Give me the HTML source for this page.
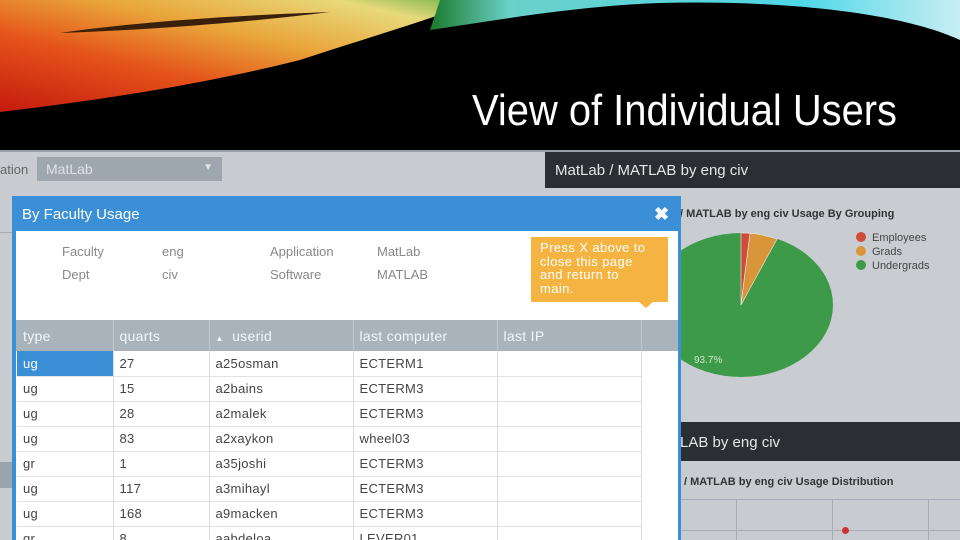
<!DOCTYPE html>
<html><head><meta charset="utf-8"><style>
*{margin:0;padding:0;box-sizing:border-box}
body{width:960px;height:540px;overflow:hidden;position:relative;background:#c8ccd0;font-family:"Liberation Sans",sans-serif}
.abs{position:absolute}
.modal{left:12px;top:196px;width:669px;height:344px;background:#3a8fd6;overflow:hidden}
.mb{left:4px;top:35px;width:662px;height:309px;background:#fff;overflow:hidden}
table{border-collapse:collapse;position:absolute;left:1px;top:89px;font-size:13px;color:#444}
td,th{height:25px;padding-left:6px;text-align:left;border-right:1px solid #dcdcdc;border-bottom:1px solid #e2e2e2;font-weight:normal;letter-spacing:.3px}
th{background:#a9b3bc;color:#f4f6f8;height:31px;font-size:14px;border-right:1px solid #c4cad0;border-bottom:none}
</style></head><body>
<svg class="abs" style="left:0;top:0" width="960" height="150">
<defs>
<linearGradient id="g1" x1="0" y1="1" x2="1" y2="0"><stop offset="0" stop-color="#c41a0e"/><stop offset=".35" stop-color="#e5541a"/><stop offset=".6" stop-color="#e9a53a"/><stop offset=".85" stop-color="#e8d97a"/><stop offset="1" stop-color="#6ab04a"/></linearGradient>
<linearGradient id="g2" x1="0" y1="0" x2="1" y2="0"><stop offset="0" stop-color="#1a7a2a"/><stop offset=".15" stop-color="#6ad0c8"/><stop offset=".7" stop-color="#4fd7e8"/><stop offset="1" stop-color="#c8eef2"/></linearGradient>
</defs>
<rect width="960" height="150" fill="#000"/>
<path d="M0 0 H480 C430 20 360 40 300 60 C200 85 100 100 0 112 Z" fill="url(#g1)"/>
<path d="M440 0 H960 V40 C900 12 780 0 660 3 C580 6 510 18 430 30 Z" fill="url(#g2)"/>
<path d="M60 33 C150 20 250 15 330 12 C250 22 150 30 60 33Z" fill="#3a2008"/>
<text x="472" y="125" fill="#fff" font-size="44" font-family="Liberation Sans" textLength="425" lengthAdjust="spacingAndGlyphs">View of Individual Users</text>
</svg>
<div class="abs" style="left:0;top:150px;width:960px;height:2px;background:#9aa0a6"></div>
<div class="abs" style="left:0;top:162px;font-size:13px;color:#666">ation</div>
<div class="abs" style="left:37px;top:157px;width:185px;height:24px;background:#9ea7af;color:#dde2e6;font-size:14px;padding:4px 9px">MatLab<span style="position:absolute;right:9px;top:5px;font-size:10px">▼</span></div>
<div class="abs" style="left:0;top:232px;width:12px;height:1px;background:#aaa"></div>
<div class="abs" style="left:0;top:462px;width:12px;height:26px;background:#9ba4ac"></div>
<div class="abs" style="left:545px;top:152px;width:415px;height:36px;background:#2b2f34;color:#e6e6e6;font-size:15px;padding:10px 10px">MatLab / MATLAB by eng civ</div>
<div class="abs" style="left:548px;top:188px;width:412px;height:234px;background:#c9cdd1"></div>
<div class="abs" style="left:680px;top:208px;font-size:11px;font-weight:bold;color:#333">/ MATLAB by eng civ Usage By Grouping</div>
<svg class="abs" style="left:660px;top:225px" width="300" height="160">
<ellipse cx="81" cy="80" rx="92" ry="72" fill="#3d9a48"/>
<path d="M81 80 L81 8 A92 72 0 0 1 90 8.2Z" fill="#d04b3a" stroke="#eee" stroke-width=".6"/>
<path d="M81 80 L90 8.2 A92 72 0 0 1 117 14Z" fill="#d9953a" stroke="#eee" stroke-width=".6"/>
<text x="34" y="138" fill="#cfe6cf" font-size="10">93.7%</text>
<circle cx="201" cy="12" r="5" fill="#d04b3a"/><text x="212" y="16" font-size="11" fill="#444">Employees</text>
<circle cx="201" cy="26" r="5" fill="#d9953a"/><text x="212" y="30" font-size="11" fill="#444">Grads</text>
<circle cx="201" cy="40" r="5" fill="#3d9a48"/><text x="212" y="44" font-size="11" fill="#444">Undergrads</text>
</svg>
<div class="abs" style="left:678px;top:422px;width:282px;height:39px;background:#2b2f34;color:#e6e6e6;font-size:15px;padding:12px 2px">LAB by eng civ</div>
<div class="abs" style="left:684px;top:476px;font-size:11px;font-weight:bold;color:#333">/ MATLAB by eng civ Usage Distribution</div>
<div class="abs" style="left:678px;top:499px;width:282px;height:1px;background:#aab"></div>
<div class="abs" style="left:678px;top:530px;width:282px;height:1px;background:#aab"></div>
<div class="abs" style="left:736px;top:499px;width:1px;height:41px;background:#aab"></div>
<div class="abs" style="left:832px;top:499px;width:1px;height:41px;background:#aab"></div>
<div class="abs" style="left:928px;top:499px;width:1px;height:41px;background:#aab"></div>
<div class="abs" style="left:842px;top:527px;width:7px;height:7px;border-radius:50%;background:#d0303a"></div>

<div class="abs modal">
<div class="abs" style="left:10px;top:10px;color:#fff;font-size:15px">By Faculty Usage</div>
<div class="abs" style="left:642px;top:8px;color:#fff;font-size:18px;font-weight:bold">✖</div>
<div class="abs mb">
<div class="abs" style="left:46px;top:9px;font-size:13px;color:#888;line-height:23px">Faculty<br>Dept</div>
<div class="abs" style="left:146px;top:9px;font-size:13px;color:#888;line-height:23px">eng<br>civ</div>
<div class="abs" style="left:254px;top:9px;font-size:13px;color:#888;line-height:23px">Application<br>Software</div>
<div class="abs" style="left:361px;top:9px;font-size:13px;color:#888;line-height:23px">MatLab<br>MATLAB</div>
<div class="abs" style="left:515px;top:6px;width:137px;height:65px;background:#f5b342;color:#fff;font-size:13px;line-height:13.5px;padding:4px 9px;letter-spacing:.4px;white-space:nowrap">Press X above to<br>close this page<br>and return to<br>main.</div>
<div class="abs" style="left:623px;top:71px;width:0;height:0;border-left:7px solid transparent;border-right:7px solid transparent;border-top:6px solid #f5b342"></div>
<div class="abs" style="left:0;top:89px;width:662px;height:31px;background:#a9b3bc"></div>
<table>
<tr><th style="width:96px">type</th><th style="width:96px">quarts</th><th style="width:144px"><span style="font-size:8px">▲</span>&nbsp; userid</th><th style="width:144px">last computer</th><th style="width:144px">last IP</th></tr>
<tr><td style="background:#3a8fd6;color:#fff">ug</td><td>27</td><td>a25osman</td><td>ECTERM1</td><td></td></tr>
<tr><td>ug</td><td>15</td><td>a2bains</td><td>ECTERM3</td><td></td></tr>
<tr><td>ug</td><td>28</td><td>a2malek</td><td>ECTERM3</td><td></td></tr>
<tr><td>ug</td><td>83</td><td>a2xaykon</td><td>wheel03</td><td></td></tr>
<tr><td>gr</td><td>1</td><td>a35joshi</td><td>ECTERM3</td><td></td></tr>
<tr><td>ug</td><td>117</td><td>a3mihayl</td><td>ECTERM3</td><td></td></tr>
<tr><td>ug</td><td>168</td><td>a9macken</td><td>ECTERM3</td><td></td></tr>
<tr><td>gr</td><td>8</td><td>aabdeloa</td><td>LEVER01</td><td></td></tr>
</table>
</div>
</div>
</body></html>
